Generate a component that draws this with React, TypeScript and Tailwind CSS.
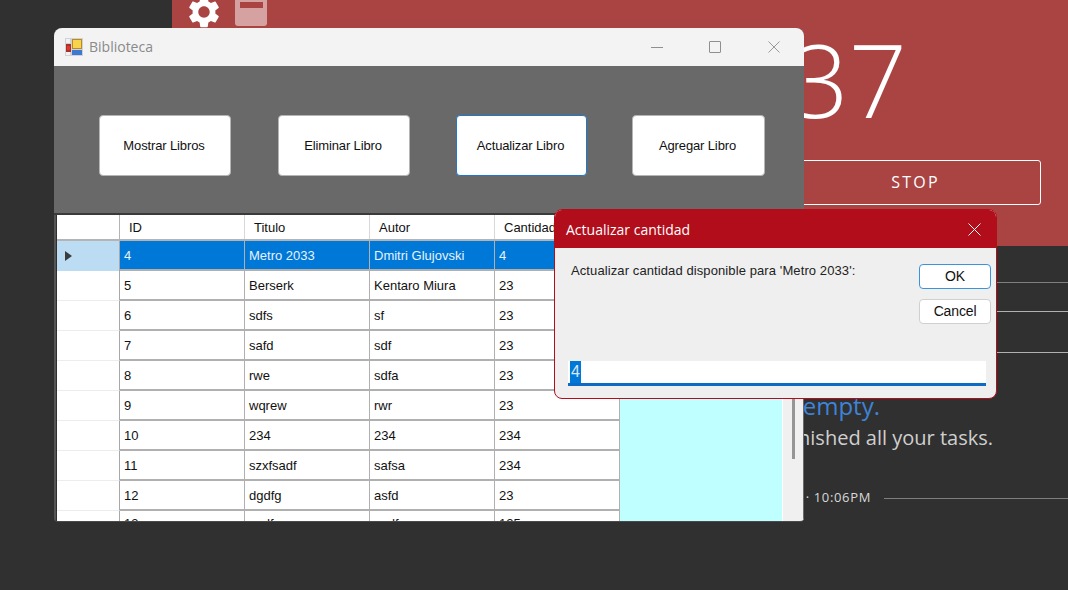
import { MdSettings } from "react-icons/md"

const rows = [
  ["4", "Metro 2033", "Dmitri Glujovski", "4"],
  ["5", "Berserk", "Kentaro Miura", "23"],
  ["6", "sdfs", "sf", "23"],
  ["7", "safd", "sdf", "23"],
  ["8", "rwe", "sdfa", "23"],
  ["9", "wqrew", "rwr", "23"],
  ["10", "234", "234", "234"],
  ["11", "szxfsadf", "safsa", "234"],
  ["12", "dgdfg", "asfd", "23"],
  ["13", "asdfg", "asdfa", "125"],
]

const headers = ["ID", "Titulo", "Autor", "Cantidad"]

const actions = [
  { label: "Mostrar Libros", box: "w-[132px] border-[#b5b5b5]" },
  { label: "Eliminar Libro", box: "w-[132px] ml-[1px] border-[#b5b5b5]" },
  { label: "Actualizar Libro", box: "w-[131px] border-[#1f78c8]" },
  { label: "Agregar Libro", box: "w-[133px] -ml-[1px] border-[#b5b5b5]" },
]

function AppIcon() {
  return (
    <svg width="18" height="18" viewBox="0 0 18 18" className="shrink-0">
      <rect x="0" y="0" width="18" height="18" fill="#d2d2d2" />
      <rect x="1" y="1" width="4" height="4" fill="#f2f2f2" />
      <rect x="1" y="14" width="4" height="3" fill="#f2f2f2" />
      <rect x="7" y="1" width="10" height="10" fill="#b98a2a" />
      <rect x="8" y="2" width="8" height="8" fill="#f7d44c" />
      <rect x="1" y="6" width="5" height="8" fill="#a93226" />
      <rect x="2" y="8" width="3" height="4" fill="#e0392b" />
      <rect x="7" y="12" width="10" height="5" fill="#3f78d0" />
    </svg>
  )
}

function CloseGlyph({ color, size }: { color: string; size: number }) {
  return (
    <svg width={size} height={size} viewBox="0 0 12 12" fill="none" stroke={color} strokeWidth="0.9">
      <path d="M0.5 0.5 11.5 11.5M11.5 0.5 0.5 11.5" />
    </svg>
  )
}

function Backdrop() {
  return (
    <div className="h-[590px] bg-[#303030] font-['Open_Sans',sans-serif] overflow-hidden">
      <div className="ml-[172px] h-[246px] bg-[#a94443] overflow-hidden">
        <div className="flex items-start ml-[13px] gap-[15px] h-[26px]">
          <MdSettings className="text-white -mt-[7px] shrink-0" size={38} />
          <div className="w-[32px] h-[26px] rounded-b-[3px] bg-[#d5a2a1] flex justify-center shrink-0 -ml-[3px]">
            <div className="w-[23px] h-[6px] mt-[2px] bg-[#a94443]" />
          </div>
        </div>
        <div className="flex justify-end pr-[161px] -mt-[15px]">
          <span className="text-[102px] leading-[136px] font-light text-white">37</span>
        </div>
        <div className="ml-[618px] mt-[13px] w-[251px] h-[45px] pb-[2px] border border-white rounded-[3px] flex items-center justify-center text-white text-[16px] tracking-[0.14em]">
          STOP
        </div>
      </div>

      <div className="ml-[172px]">
        <div className="h-[37px] border-b border-[#7f7f7f]" />
        <div className="h-[29px] border-b border-[#b0b0b0]" />
        <div className="h-[41px] border-b border-[#b0b0b0]" />
        <div className="flex justify-end pr-[188px] mt-[35px] text-[24px] leading-[36px] text-[#3f83d6]">empty.</div>
        <div className="flex justify-end pr-[75px] -mt-[1px] text-[20px] leading-[30px] text-[#cfcfcf]">
          You've finished all your tasks.
        </div>
        <div className="flex justify-end items-center mt-[35px] h-[20px] text-[13px] text-[#d8d8d8] tracking-[0.05em]">
          <span>Today · 10:06PM</span>
          <div className="w-[184px] h-px bg-[#7e7e7e] ml-[13px]" />
        </div>
      </div>
    </div>
  )
}

function LibraryWindow() {
  return (
    <div className="absolute left-[54px] top-[28px] w-[750px] h-[494px] rounded-t-[8px] rounded-b-[4px] overflow-hidden flex flex-col bg-[#555] border-b border-[#4a4a4a] font-['Liberation_Sans',sans-serif]">
      <div className="h-[38px] bg-[#f3f3f3] flex items-center pl-[11px] shrink-0">
        <AppIcon />
        <span className="ml-[6px] -mt-[1px] text-[14px] text-[#8a8a8a] font-['Open_Sans',sans-serif]">Biblioteca</span>
        <div className="ml-auto flex items-center pr-[24px]">
          <div className="w-[12px] h-px bg-[#8f8f8f]" />
          <div className="ml-[46px] w-[12px] h-[12px] border border-[#8f8f8f] rounded-[1px]" />
          <div className="ml-[47px]">
            <CloseGlyph color="#8f8f8f" size={12} />
          </div>
        </div>
      </div>

      <div className="h-[149px] shrink-0 flex items-start pl-[45px] pt-[49px] gap-[46px] bg-[#696969] border-b-2 border-[#3a3a3a]">
        {actions.map((a) => (
          <div
            key={a.label}
            className={`h-[61px] pr-[2px] bg-white rounded-[4px] flex items-center justify-center text-[13px] tracking-[-0.01em] text-[#111] border ${a.box}`}
          >
            {a.label}
          </div>
        ))}
      </div>

      <div className="flex-1 min-h-0 flex ml-[2px] border-l border-[#2f2f2f] overflow-hidden">
        <div className="w-[563px] shrink-0 bg-white">
          <div className="flex h-[26px] text-[13px] text-[#111] border-b-2 border-[#b4b4b4]">
            <div className="w-[63px] border-r border-[#b4b4b4]" />
            {headers.map((h) => (
              <div key={h} className="w-[125px] pl-[9px] pt-[2px] flex items-center border-r border-[#d8d8d8] overflow-hidden whitespace-nowrap">
                {h}
              </div>
            ))}
          </div>
          {rows.map((row, i) => (
            <div key={row[0]} className="flex h-[30px] text-[13px]">
              <div
                className={`w-[63px] flex items-center pl-[8px] border-r border-[#a8a8a8] ${
                  i === 0 ? "bg-[#bcdcf4]" : "border-b border-b-[#ececec]"
                }`}
              >
                {i === 0 && <div className="w-0 h-0 border-y-[5px] border-y-transparent border-l-[7px] border-l-[#3c3c3c]" />}
              </div>
              {row.map((cell, j) => (
                <div
                  key={j}
                  className={`w-[125px] pl-[4px] flex items-center whitespace-nowrap border-r border-b-2 border-[#b0b0b0] ${
                    i === 0 ? "bg-[#0078d7] text-[#e8f2fb]" : "text-[#111]"
                  } ${i === rows.length - 1 ? "pb-[3px]" : "pt-[2px]"}`}
                >
                  {cell}
                </div>
              ))}
            </div>
          ))}
        </div>
        <div className="w-[162px] shrink-0 bg-[#c0ffff]" />
        <div className="flex-1 bg-[#f0f0f0] flex justify-center border-l border-l-white border-r border-r-[#6a6a6a]">
          <div className="w-[3px] h-[244px] bg-[#969696]" />
        </div>
      </div>
    </div>
  )
}

function PromptDialog() {
  return (
    <div className="absolute left-[554px] top-[209px] w-[443px] h-[190px] rounded-[8px] overflow-hidden border border-[#b20d1b] bg-[#efefef] flex flex-col font-['Liberation_Sans',sans-serif]">
      <div className="h-[38px] shrink-0 bg-[#b20d1b] flex items-center justify-between pl-[11px] pr-[15px] text-white text-[14px] font-['Open_Sans',sans-serif]">
        Actualizar cantidad
        <CloseGlyph color="#ffffff" size={13} />
      </div>
      <div className="flex-1 flex justify-between pl-[16px] pr-[5px] pt-[16px]">
        <span className="-mt-[1px] text-[13px] leading-[15px] tracking-[0.1px] text-[#222]">
          Actualizar cantidad disponible para 'Metro 2033':
        </span>
        <div className="flex flex-col gap-[10px] w-[72px]">
          <div className="h-[25px] bg-white border border-[#3b93dd] rounded-[4px] flex items-center justify-center text-[14px] text-[#111]">
            OK
          </div>
          <div className="h-[25px] bg-white border border-[#d0d0d0] rounded-[4px] flex items-center justify-center text-[14px] tracking-[-0.01em] text-[#111]">
            Cancel
          </div>
        </div>
      </div>
      <div className="ml-[13px] mr-[10px] mb-[12px] h-[25px] bg-white border-b-[3px] border-[#0c6cc4] pl-[2px] flex items-center text-[16px]">
        <span className="bg-[#0078d7] text-[#d8e8f6] px-[1px] leading-[22px]">4</span>
      </div>
    </div>
  )
}

export default function App() {
  return (
    <div className="relative w-[1068px] h-[590px] overflow-hidden">
      <Backdrop />
      <LibraryWindow />
      <PromptDialog />
    </div>
  )
}
